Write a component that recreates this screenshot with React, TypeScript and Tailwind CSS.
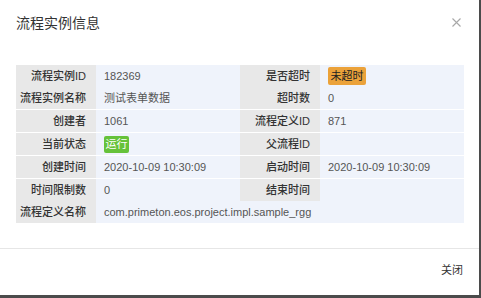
import React from "react";

interface Cell {
    label: string;
    value?: React.ReactNode;
}

interface Row {
    cells: Cell[];
    border: boolean;
}

const Tag: React.FC<{ kind: "warn" | "ok"; children: React.ReactNode }> = ({ kind, children }) =>
    kind === "warn" ? (
        <span className="inline-flex h-[18px] items-center rounded-[2px] bg-[#eba23a] px-[2.5px] leading-none text-[#222]">{children}</span>
    ) : (
        <span className="inline-flex h-[17px] items-center rounded-[2px] bg-[#66c23a] px-[1.5px] leading-none text-white">{children}</span>
    );

const rows: Row[] = [
    { border: false, cells: [{ label: "流程实例ID", value: "182369" }, { label: "是否超时", value: <Tag kind="warn">未超时</Tag> }] },
    { border: false, cells: [{ label: "流程实例名称", value: "测试表单数据" }, { label: "超时数", value: "0" }] },
    { border: true, cells: [{ label: "创建者", value: "1061" }, { label: "流程定义ID", value: "871" }] },
    { border: true, cells: [{ label: "当前状态", value: <Tag kind="ok">运行</Tag> }, { label: "父流程ID" }] },
    { border: true, cells: [{ label: "创建时间", value: "2020-10-09 10:30:09" }, { label: "启动时间", value: "2020-10-09 10:30:09" }] },
    { border: true, cells: [{ label: "时间限制数", value: "0" }, { label: "结束时间" }] },
    { border: false, cells: [{ label: "流程定义名称", value: "com.primeton.eos.project.impl.sample_rgg" }] },
];

const App: React.FC = () => {
    return (
        <div
            className="h-[298px] w-[481px] overflow-hidden bg-[#4b4b4b]"
            style={{ fontFamily: '"Liberation Sans", "Noto Sans CJK SC", sans-serif' }}
        >
            <div className="flex h-[295px] w-[479px] flex-col bg-white">
                {/* header */}
                <div className="flex h-[44px] items-center justify-between pl-4 pr-[18px] pt-[2px]">
                    <span className="text-[14px] text-[#333]">流程实例信息</span>
                    <svg width="9" height="9" viewBox="0 0 9 9" className="mb-[2px]">
                        <path d="M0.5 0.5L8.5 8.5M8.5 0.5L0.5 8.5" stroke="#a8a8a8" strokeWidth="1.1" />
                    </svg>
                </div>

                {/* body */}
                <div className="h-[204px] pl-4 pr-[15px] pt-[21px]">
                    <div className="flex flex-col text-[11px]">
                        {rows.map((row, i) => (
                            <div key={i} className={`flex h-[22px] ${row.border ? "box-content border-t border-white" : ""}`}>
                                {row.cells.map((cell, j) => (
                                    <div key={j} className={`flex ${row.cells.length === 1 ? "flex-1" : "w-[224px]"}`}>
                                        <div className="flex w-[80px] shrink-0 items-center justify-end whitespace-nowrap bg-[#e8e8e8] pr-[10px] font-medium text-[#333]">
                                            {cell.label}
                                        </div>
                                        <div className="flex flex-1 items-center whitespace-nowrap bg-[#eff3fb] pl-2 text-[#555]">{cell.value}</div>
                                    </div>
                                ))}
                            </div>
                        ))}
                    </div>
                </div>

                {/* footer */}
                <div className="flex flex-1 items-center justify-end border-t border-[#e6e6e6] pb-[3px] pr-[16px]">
                    <span className="text-[11px] text-[#333]">关闭</span>
                </div>
            </div>
        </div>
    );
};

export default App;
